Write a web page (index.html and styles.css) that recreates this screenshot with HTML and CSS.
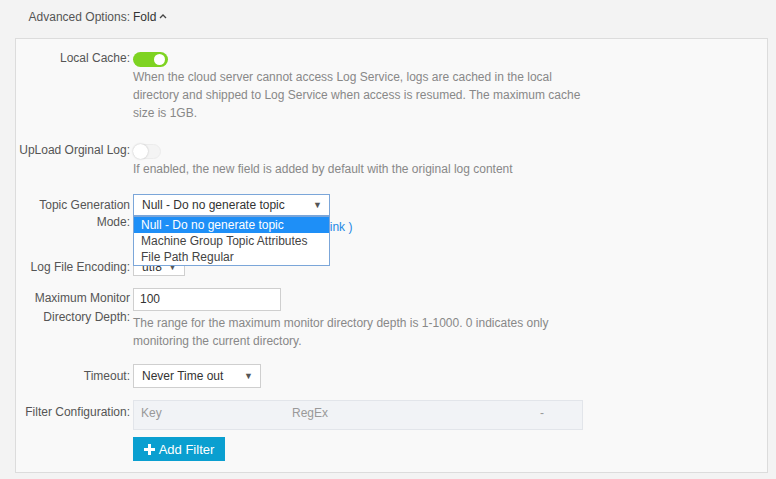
FILE: index.html
```html
<!DOCTYPE html>
<html>
<head>
<meta charset="utf-8">
<link rel="stylesheet" href="styles.css">
</head>
<body>
<div class="header">
  <div class="label">Advanced Options:</div>
  <div class="fold">Fold <svg class="chev" width="8" height="6" viewBox="0 0 8 6"><path d="M1 5 L4 2 L7 5" fill="none" stroke="#444" stroke-width="1.3"/></svg></div>
</div>
<div class="panel">
  <div class="row r-cache">
    <div class="label">Local Cache:</div>
    <div class="ctrl">
      <div class="sw-line"><span class="switch on"><span class="knob"></span></span></div>
      <div class="desc">When the cloud server cannot access Log Service, logs are cached in the local directory and shipped to Log Service when access is resumed. The maximum cache size is 1GB.</div>
    </div>
  </div>
  <div class="row r-upload">
    <div class="label">UpLoad Orginal Log:</div>
    <div class="ctrl">
      <div class="sw-line"><span class="switch off"><span class="knob"></span></span></div>
      <div class="desc">If enabled, the new field is added by default with the original log content</div>
    </div>
  </div>
  <div class="row r-topic">
    <div class="label two">Topic Generation<br>Mode:</div>
    <div class="ctrl">
      <div class="dd-wrap">
        <div class="select focus s-topic"><span>Null - Do no generate topic</span><span class="arrow">&#9660;</span></div>
        <div class="dropdown">
          <div class="opt sel">Null - Do no generate topic</div>
          <div class="opt">Machine Group Topic Attributes</div>
          <div class="opt">File Path Regular</div>
        </div>
      </div>
      <div class="help">Topic generation mode <a class="link">( Help link )</a></div>
    </div>
  </div>
  <div class="row r-enc">
    <div class="label">Log File Encoding:</div>
    <div class="ctrl">
      <div class="select s-enc"><span>utf8</span><span class="arrow">&#9660;</span></div>
    </div>
  </div>
  <div class="row r-depth">
    <div class="label depth">Maximum Monitor<br>Directory Depth:</div>
    <div class="ctrl">
      <div class="input">100</div>
      <div class="desc d-depth">The range for the maximum monitor directory depth is 1-1000. 0 indicates only monitoring the current directory.</div>
    </div>
  </div>
  <div class="row r-timeout">
    <div class="label tall">Timeout:</div>
    <div class="ctrl">
      <div class="select s-timeout"><span>Never Time out</span><span class="arrow">&#9660;</span></div>
    </div>
  </div>
  <div class="row r-filter">
    <div class="label tall">Filter Configuration:</div>
    <div class="ctrl">
      <div class="ftable">
        <span class="c-key">Key</span>
        <span class="c-re">RegEx</span>
        <span class="c-dash">-</span>
      </div>
      <div class="btn"><svg width="11" height="11" viewBox="0 0 11 11"><path d="M4 0h3v4h4v3H7v4H4V7H0V4h4z" fill="#fff"/></svg><span>Add Filter</span></div>
    </div>
  </div>
</div>
</body>
</html>
```

FILE: styles.css
```css
* { box-sizing: border-box; }
html, body { margin: 0; padding: 0; }
body {
  background: #f3f3f3;
  font-family: "Liberation Sans", Arial, sans-serif;
  font-size: 12px;
  color: #555;
  width: 776px;
  height: 479px;
  overflow: hidden;
}
.header {
  display: flex;
  padding: 8px 0 0 16px;
  line-height: 18px;
}
.header .label { width: 114px; text-align: right; margin-right: 3px; }
.fold { color: #333; display: flex; align-items: center; gap: 3px; }
.chev { margin-top: -2px; }

.panel {
  margin: 12px 8px 0 15px;
  background: #f9f9f9;
  border: 1px solid #dcdcdc;
  padding: 10px 0 11px 0;
}
.row { display: flex; align-items: flex-start; }
.label {
  width: 114px;
  flex: none;
  text-align: right;
  margin-right: 3px;
  line-height: 18px;
  color: #555;
  white-space: nowrap;
}
.label.two { padding-top: 3px; line-height: 17px; }
.label.depth { padding-top: 1px; line-height: 19px; }
.label.tall { line-height: 24px; }
.ctrl { width: 455px; }

.sw-line { height: 18px; padding-top: 3px; }
.switch {
  display: block;
  position: relative;
  height: 15px;
  border-radius: 8px;
}
.switch.on { width: 35px; background: #7ed321; }
.switch.on .knob { position: absolute; right: 3px; top: 2px; width: 11px; height: 11px; border-radius: 50%; background: #fff; }
.switch.off { width: 28px; background: #f4f4f4; border: 1px solid #ececec; }
.switch.off .knob { position: absolute; left: -1px; top: -1px; width: 15px; height: 15px; border-radius: 50%; background: #fff; box-shadow: 0 0 2px rgba(0,0,0,0.25); }

.desc { color: #888; line-height: 18px; margin-top: 1px; }

.r-upload { margin-top: 19px; }
.r-topic { margin-top: 16px; }
.r-enc { margin-top: 22px; }
.r-depth { margin-top: 12px; }
.r-timeout { margin-top: 14px; }
.r-filter { margin-top: 12px; }

.select {
  display: flex;
  align-items: center;
  justify-content: space-between;
  background: #fff;
  border: 1px solid #cfcfcf;
  color: #333;
  padding: 0 7px 0 8px;
}
.select .arrow { font-size: 9px; color: #555; }
.select.focus { border-color: #7ba6d9; }
.s-topic { width: 197px; height: 22px; }
.s-enc { width: 52px; height: 18px; }
.s-timeout { width: 128px; height: 24px; }

.dd-wrap { position: relative; width: 197px; }
.dropdown {
  position: absolute;
  left: 0;
  top: 22px;
  width: 197px;
  height: 50px;
  background: #fff;
  border: 1px solid #7ba6d9;
  z-index: 5;
}
.opt { height: 16px; line-height: 16px; padding-left: 7px; color: #444; white-space: nowrap; }
.opt.sel { background: #1e8ff7; color: #fff; }

.help { margin-top: 2px; line-height: 18px; color: #888; white-space: nowrap; padding-left: 34px; }
.link { color: #1e88e5; }

.input {
  width: 148px;
  height: 23px;
  background: #fff;
  border: 1px solid #cfcfcf;
  color: #333;
  line-height: 21px;
  padding-left: 6px;
}
.d-depth { margin-top: 3px; }

.ftable {
  position: relative;
  width: 450px;
  height: 30px;
  background: #f1f3f6;
  border: 1px solid #e2e5ea;
  color: #999;
  line-height: 24px;
}
.ftable span { position: absolute; top: 0; }
.c-key { left: 7px; }
.c-re { left: 158px; }
.c-dash { left: 406px; }

.btn {
  margin-top: 7px;
  width: 92px;
  height: 24px;
  background: #0a9fd0;
  color: #fff;
  display: flex;
  align-items: center;
  justify-content: center;
  gap: 4px;
  font-size: 13px;
}
```
